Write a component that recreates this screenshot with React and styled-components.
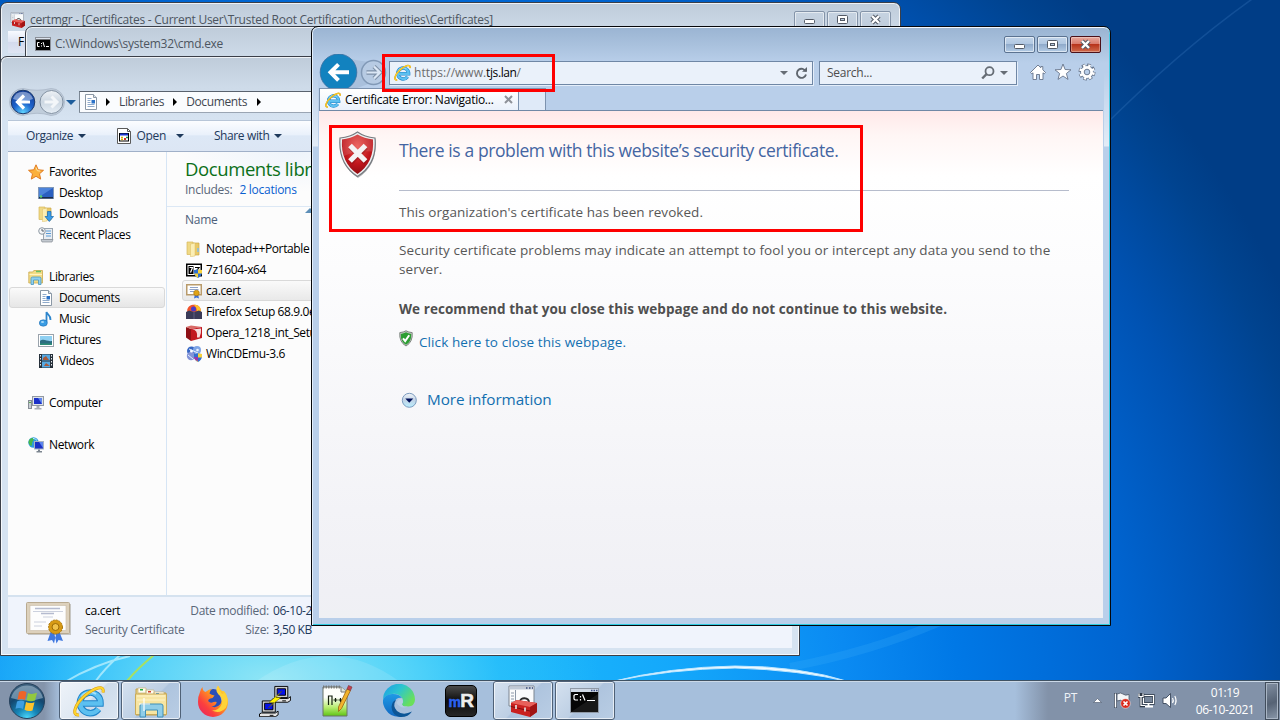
import React from "react";
import styled, { createGlobalStyle, css } from "styled-components";

const Global = createGlobalStyle`
  * { box-sizing: border-box; }
  body { margin: 0; overflow: hidden; font-family: "Open Sans", "Noto Sans", sans-serif; font-size: 12px; }
  svg { display: block; flex: none; }
`;

const Desktop = styled.div`
  position: relative;
  width: 1280px;
  height: 720px;
  overflow: hidden;
  display: flex;
  flex-direction: column;
  justify-content: flex-end;
  background:
    radial-gradient(ellipse 330px 150px at 270px 680px, rgba(150, 232, 245, 0.95), rgba(100, 218, 248, 0.8) 40%, rgba(50, 196, 250, 0.5) 70%, rgba(30, 180, 250, 0) 100%),
    radial-gradient(circle 1000px at 380px 720px, #22c4fb 0, #14a8fb 30%, #0a8af2 47%, #0078e6 58%, #0064d0 75%, #0052b2 86%, #00438f 96%, #003d86 100%);
`;

const Wallpaper = styled.svg`
  position: absolute;
  left: 0;
  top: 0;
`;

const Text = styled.span`
  font-size: ${(p) => p.$size || 12}px;
  letter-spacing: ${(p) => (p.$ls === undefined ? -0.27 : p.$ls)}px;
  color: ${(p) => p.$color || "#000"};
  font-weight: ${(p) => (p.$bold ? 700 : 400)};
  line-height: ${(p) => p.$lh || 20}px;
  white-space: nowrap;
`;

const Label = styled(Text)`
  letter-spacing: -0.38px;
`;

const Window = styled.section`
  position: absolute;
  left: ${(p) => p.$x}px;
  top: ${(p) => p.$y}px;
  width: ${(p) => p.$w}px;
  height: ${(p) => p.$h}px;
  display: flex;
  flex-direction: column;
  border: 1px solid #3b3f48;
  border-radius: 7px 7px 0 0;
  padding: 0 7px 7px;
  overflow: hidden;
  box-shadow: inset 0 0 0 1px rgba(255, 255, 255, 0.75);
  background: linear-gradient(#bfccda, #cddae8 28px, #d6e3f1 62px);
  ${(p) =>
    p.$active &&
    css`
      border-color: #05070b;
      box-shadow: inset 0 1px 0 #f2f8ff, inset 1px 0 0 #e4effb, inset -1px 0 0 #48cde4, inset 0 -1px 0 #2fcbe0;
      background:
        linear-gradient(rgba(255, 255, 255, 0) 45px, rgba(255, 255, 255, 0.6) 119px, transparent 120px) left / 6px 100% no-repeat,
        linear-gradient(rgba(255, 255, 255, 0) 45px, rgba(255, 255, 255, 0.6) 119px, transparent 120px) right / 6px 100% no-repeat,
        linear-gradient(#9ab4d2, #a9c1dd 18px, #b9cfea 36px);
    `}
`;

const TitleBar = styled.header`
  display: flex;
  align-items: center;
  gap: ${(p) => p.$gap || 4}px;
  height: ${(p) => p.$h}px;
  flex: none;
  padding: ${(p) => p.$pad || "0"};
`;

const Caption = styled.div`
  display: flex;
  gap: 2px;
  margin-left: auto;
  align-self: flex-start;
  padding-top: ${(p) => p.$top}px;
`;

const CaptionButton = styled.div`
  display: flex;
  align-items: center;
  justify-content: center;
  width: 31px;
  height: 17px;
  border: 1px solid ${(p) => (p.$close ? "#4b1019" : p.$faded ? "#8494a9" : "#5c7391")};
  border-radius: 2px;
  box-shadow: inset 0 0 0 1px rgba(255, 255, 255, ${(p) => (p.$close ? 0.3 : 0.55)});
  background: ${(p) =>
    p.$close
      ? "linear-gradient(#e8a99d, #d9796b 48%, #b8341c 50%, #cf6a4c)"
      : p.$faded
      ? "linear-gradient(#c6d3e1, #c0cddc)"
      : "linear-gradient(#c3d5ea, #b0c7e1 48%, #90abcb 50%, #b4cce6)"};
`;

const CertMenu = styled.div`
  display: flex;
  align-items: flex-start;
  width: 100%;
  height: 22px;
  padding: 1px 10px;
  background: linear-gradient(#f8faff, #dfe5f4 48%, #d3daed 50%, #dfe5f3);
`;

/* ---------- Explorer ---------- */
const ExplorerNav = styled.div`
  display: flex;
  align-items: center;
  height: 36px;
  flex: none;
  margin-top: 27px;
`;

const Address = styled.div`
  display: flex;
  align-items: center;
  flex: 1;
  height: 22px;
  margin-left: 3px;
  padding-left: 3px;
  border: 1px solid;
  border-color: #59626e #9aa5b3 #9aa5b3 #7b8794;
  background: #fafcfe;
`;

const Toolbar = styled.div`
  display: flex;
  align-items: center;
  height: 32px;
  flex: none;
  padding-left: 18px;
  border-top: 1px solid #b8c6d8;
  border-bottom: 1px solid #a0b0c8;
  background: linear-gradient(#fcfdff, #eaf1fb 45%, #dde8f6 50%, #dce6f4);
`;

const ToolItem = styled.div`
  display: flex;
  align-items: center;
  margin-right: ${(p) => p.$mr}px;
`;

const Caret = styled.i`
  width: 0;
  height: 0;
  border: ${(p) => p.$w || 4}px solid transparent;
  border-top-color: ${(p) => p.$color || "#1e395b"};
  border-bottom: 0;
  margin-left: ${(p) => p.$ml || 0}px;
  margin-right: ${(p) => p.$mr || 0}px;
`;

const Crumb = styled.i`
  width: 0;
  height: 0;
  border: 4px solid transparent;
  border-left: 4px solid #000;
  border-right: 0;
  margin: ${(p) => p.$m};
`;

const ExplorerBody = styled.div`
  display: flex;
  flex: 1;
  min-height: 0;
  background: #fcfcfc;
`;

const NavPane = styled.nav`
  width: 159px;
  flex: none;
  padding: 9px 1px 0;
  border-right: 1px solid #d6e5f5;
`;

const NavRow = styled.div`
  display: flex;
  align-items: center;
  height: 21px;
  gap: 5px;
  padding-left: ${(p) => (p.$child ? 28 : 18)}px;
  border: 1px solid transparent;
  border-radius: 3px;
  ${(p) =>
    p.$selected &&
    css`
      border-color: #d9d9d9;
      background: linear-gradient(#fafafa, #e6e6e6);
    `}
`;

const FilePane = styled.main`
  flex: 1;
  display: flex;
  flex-direction: column;
  background: radial-gradient(ellipse 120px 40px at 130px 0, #eef4fb, transparent);
`;

const LibraryHead = styled.div`
  display: flex;
  flex-direction: column;
  height: 55px;
  padding: 6px 0 0 18px;
  border-bottom: 1px solid #dce8f5;
`;

const LibrarySub = styled.div`
  display: flex;
  gap: 7px;
`;

const ColumnHead = styled.div`
  display: flex;
  align-items: flex-start;
  height: 31px;
  padding: 3px 0 0 18px;
`;

const SortMark = styled.i`
  width: 0;
  height: 0;
  border: 5px solid transparent;
  border-bottom-color: #5d8fb8;
  border-top: 0;
  margin: -2px 0 0 88px;
`;

const FileRow = styled.div`
  display: flex;
  align-items: center;
  gap: 4px;
  height: 21px;
  margin-left: 15px;
  padding-left: 3px;
  border: 1px solid transparent;
  border-radius: 3px;
  ${(p) =>
    p.$selected &&
    css`
      border-color: #d9d9d9;
      background: linear-gradient(#fafafa, #e9e9e9);
    `}
`;

const Details = styled.footer`
  display: flex;
  height: 53px;
  flex: none;
  padding: 5px 0 0 18px;
  border-top: 2px solid #d5e2ef;
  background: #f0f4fc;
`;

const DetailsCol = styled.div`
  display: flex;
  flex-direction: column;
  align-items: ${(p) => (p.$right ? "flex-end" : "flex-start")};
  width: ${(p) => p.$w}px;
  margin-left: ${(p) => p.$ml}px;
`;

/* ---------- Browser ---------- */
const BrowserBar = styled.div`
  display: flex;
  align-items: center;
  height: 38px;
  flex: none;
  margin-top: -3px;
  padding-top: 1px;
`;

const Field = styled.div`
  display: flex;
  align-items: center;
  width: ${(p) => p.$w}px;
  height: 24px;
  margin-left: ${(p) => p.$ml}px;
  padding: 0 ${(p) => p.$pr}px 0 ${(p) => p.$pl}px;
  border: 1px solid #6f87a5;
  box-shadow: 1px 1px 0 #e4eefa;
  background: #eaf1fa;
`;

const Spacer = styled.div`
  flex: 1;
`;

const Tools = styled.div`
  display: flex;
  gap: 6.5px;
  margin: -2px 0 0 12px;
`;

const Tabs = styled.div`
  position: relative;
  display: flex;
  height: 23px;
  flex: none;
  margin-top: -3px;
  border-bottom: 1px solid #7088a6;
`;

const Tab = styled.div`
  display: flex;
  align-items: center;
  gap: 4px;
  width: 200px;
  height: 22px;
  padding: 0 5px 0 5px;
  border: 1px solid #7c92ae;
  border-bottom: 0;
  background: linear-gradient(#ffffff, #eaf1fb);
`;

const NewTab = styled.div`
  width: 27px;
  border: 1px solid #7c92ae;
  border-width: 1px 1px 0 0;
  background: #dfeaf8;
`;

const Page = styled.article`
  flex: 1;
  display: flex;
  align-items: flex-start;
  padding: 20px 34px 0 19px;
  background: linear-gradient(#ffe9e9, #fff6f5 25px, #ffffff 65px, #fcfcfd 160px, #f0f0f5 480px, #eff0f4);
`;

const Message = styled.div`
  flex: 1;
  display: flex;
  flex-direction: column;
  margin: 1px 0 0 21px;
`;

const Rule = styled.div`
  height: 1px;
  margin: 21px 0 12px;
  background: #b6bccc;
`;

const LinkRow = styled.div`
  display: flex;
  align-items: ${(p) => p.$align || "center"};
  gap: ${(p) => p.$gap}px;
  margin-top: ${(p) => p.$mt}px;
  padding-left: ${(p) => p.$pl || 0}px;
`;

const Highlight = styled.div`
  position: absolute;
  left: ${(p) => p.$x}px;
  top: ${(p) => p.$y}px;
  width: ${(p) => p.$w}px;
  height: ${(p) => p.$h}px;
  border: 3px solid #fe0000;
`;

/* ---------- Taskbar ---------- */
const Taskbar = styled.div`
  position: relative;
  display: flex;
  height: 40px;
  border-top: 1px solid #3f5263;
  box-shadow: inset 0 1px 0 #cbd9e8;
  background: linear-gradient(90deg, #8494ab 0, #8494ab 44px, #a6bfdc 60px, #a6bfdc 1015px, #8292a9 1048px, #8292a9);
`;

const Start = styled.div`
  display: flex;
  align-items: center;
  width: 59px;
  padding-left: 8px;
`;

const TaskButton = styled.div`
  display: flex;
  align-items: center;
  justify-content: center;
  width: 60px;
  height: 39px;
  margin-right: 2px;
  border: 1px solid transparent;
  border-radius: 3px;
  ${(p) =>
    p.$open &&
    css`
      border-color: #4f6177;
      box-shadow: inset 0 0 0 1px rgba(255, 255, 255, 0.65);
      background: linear-gradient(135deg, #d5e1ef, #bdcfe4 50%, #aec4de 52%, #b9cde4);
    `}
  ${(p) =>
    p.$open === "active" &&
    css`
      background: linear-gradient(135deg, #eef3f9, #dfe8f2 50%, #cddbea 52%, #dbe6f2);
    `}
`;

const Tray = styled.div`
  display: flex;
  align-items: center;
  margin-left: auto;
`;

const TrayIcons = styled.div`
  display: flex;
  align-items: center;
  gap: 7px;
  margin: 0 6px 0 12px;
`;

const Language = styled.div`
  margin: -6px 16px 0 0;
`;

const Clock = styled.div`
  display: flex;
  flex-direction: column;
  align-items: center;
  width: 80px;
`;

const ShowDesktop = styled.div`
  width: 14px;
  height: 38px;
  margin: 1px 1px 0 0;
  border: 1px solid #414d5c;
  box-shadow: inset 0 0 0 1px #a9b5c4;
  background: linear-gradient(160deg, #8290a3, #5d6a7c 45%, #566375 55%, #8a98aa);
`;

/* ---------- Icons ---------- */
const Svg = ({ s = 16, w, h, vb, children, ...rest }) => (
  <svg width={w || s} height={h || s} viewBox={vb || `0 0 ${w || s} ${h || s}`} fill="none" {...rest}>
    {children}
  </svg>
);

const IE = ({ s }) => (
  <Svg s={s} vb="0 0 32 32">
    <path d="M9 18.500H27.500A10.300 10.300 0 1 0 25.500 24" stroke="#1d83c9" strokeWidth="6.600" />
    <path d="M9 18.500H27.500A10.300 10.300 0 1 0 25.500 24" stroke="#5cc0f0" strokeWidth="4.600" />
    <path d="M8.500 12C11 7.500 18 5.500 23 9" stroke="#a7e2fb" strokeWidth="1.800" />
    <path d="M6 30C-2 31 2 19 12 10.500C21 3 32 -1 30 7.500" stroke="#d99a0b" strokeWidth="3" />
    <path d="M6 30C-2 31 2 19 12 10.500C21 3 32 -1 30 7.500" stroke="#fdd42e" strokeWidth="2" />
  </Svg>
);

const Min = ({ c = "#535a66" }) => (
  <Svg w={13} h={11}><rect x="1.500" y="5.500" width="10" height="4" rx="1" fill="#fff" stroke={c} /></Svg>
);
const Max = ({ c = "#535a66" }) => (
  <Svg w={13} h={11}><rect x="1.500" y="1.500" width="10" height="8" rx="1" fill="#fff" stroke={c} /><rect x="4.500" y="4.500" width="4" height="2" fill="#b9cbe0" stroke={c} /></Svg>
);
const Close = ({ c = "#535a66" }) => (
  <Svg w={13} h={11}>
    <path d="M3 2l7 7M10 2L3 9" stroke={c} strokeWidth="4.400" />
    <path d="M3 2l7 7M10 2L3 9" stroke="#fff" strokeWidth="2.400" />
  </Svg>
);

const Toolbox = ({ s = 16 }) => (
  <Svg s={s} vb="0 0 32 32">
    <path d="M2 1h25v20H2z" fill="#fafbfc" stroke="#7d8590" />
    <path d="M2.500 1.500h24v3h-24z" fill="#c0c9d6" />
    <path d="M19 3h1.500M22 3h1.500M25 3h1" stroke="#384a78" strokeWidth="1.500" />
    <path d="M8.500 5v16M4 8h3M4 11h3M4 14h3M4 17h3" stroke="#8c98a8" />
    <path d="M13 16.500c0-4.500 9-4.500 9 1" stroke="#2b2b2b" strokeWidth="1.800" />
    <path d="M4 18l6-3 20 3v9l-7 5-19-5z" fill="#c9201f" />
    <path d="M4 18l6-3 20 3-7 4z" fill="#e8605a" />
    <path d="M4 21.500l19 4.500 7-4.500" stroke="#7d0f10" />
    <path d="M23 22v10l7-5v-9z" fill="#a01414" />
    <path d="M9 20v4M18 22.500v4" stroke="#e8e8e8" strokeWidth="1.600" />
  </Svg>
);

const Cmd = ({ big }) =>
  big ? (
    <Svg w={32} h={28}>
      <rect x="1.500" y="1.500" width="28" height="24" fill="#050505" stroke="#8f99a6" />
      <path d="M2 2h27v3H2z" fill="#cfd8e4" />
      <path d="M22 3.500h1.500M24.500 3.500h1.500M27 3.500h1.500" stroke="#3c4f86" strokeWidth="1.500" />
      <path d="M9 7.500H6L5 8.500V12l1 1H9M11.500 9v1.500M11.500 12v1.500M13.500 7.500l2.500 6M18 13.500h8" stroke="#fff" strokeWidth="1.200" />
      <path d="M2 25L29 7v18z" fill="#fff" opacity=".08" />
    </Svg>
  ) : (
    <Svg w={16} h={14}>
      <rect x=".5" y=".5" width="15" height="13" fill="#000" stroke="#8a8f98" />
      <path d="M1 1h14v1.500H1z" fill="#dde4ee" />
      <path d="M4.500 5.500h-2v4h2M6.500 6v1M6.500 8.500v1M8 5l1.500 5M11 9.500h3" stroke="#fff" />
    </Svg>
  );

const Star = () => (
  <Svg><path d="M8 .8l2.200 5 5.300.5-4 3.500 1.200 5.300L8 12.300l-4.700 2.800 1.200-5.300-4-3.500 5.300-.5z" fill="#fbb03b" stroke="#e07b22" /><path d="M8 3.500l1.300 3.200 3 .4" stroke="#fee7a6" /></Svg>
);
const DesktopIcon = () => (
  <Svg><rect x=".5" y="2.500" width="15" height="11" fill="#2a5fc0" stroke="#7f97b8" /><path d="M1 3h14L1 12z" fill="#5b93e6" opacity=".7" /><path d="M1 12h14v1.500H1z" fill="#1a2b49" /><circle cx="3" cy="11.500" r="1.300" fill="#5ad06c" /></Svg>
);
const Folder = ({ arrow }) => (
  <Svg>
    <path d="M1 1h6v12.500H1z" fill="#f0d985" stroke="#d7b75a" strokeWidth=".7" />
    <path d="M7 2h6v12H7z" fill="#e9c968" stroke="#cda94a" strokeWidth=".7" />
    <path d="M4.500 3l4.500-1V15l-4.500.8z" fill="#fbeeb4" stroke="#dcbf68" strokeWidth=".5" />
    {arrow ? <path d="M9.500 5.500h3.500v5h2.500L11.300 15.500 7 10.500h2.500z" fill="#3b9ce8" stroke="#1668b0" strokeWidth=".7" /> : <path d="M12 7v4" stroke="#7fbcec" strokeWidth="1.500" />}
  </Svg>
);
const Recent = () => (
  <Svg><rect x="5.500" y="1.500" width="9" height="11" fill="#e9edf2" stroke="#9aa5b0" /><path d="M8 4h5M8 6.500h5M8 9h5" stroke="#5b9bd6" /><path d="M3 12.500h12l-1 2.500H4z" fill="#c3c9d0" stroke="#878e96" strokeWidth=".7" /><circle cx="4" cy="4" r="3.300" fill="#f4f6f8" stroke="#8e98a2" /><path d="M4 2v2h2" stroke="#56616c" /></Svg>
);
const Libraries = () => (
  <Svg><path d="M.8 3h4l1-1.500h8.700V14H.8z" fill="#f3dc86" stroke="#c9a94e" strokeWidth=".8" /><path d="M8 2.500h5" stroke="#67c064" strokeWidth="1.500" /><path d="M1.500 5.500h12.500" stroke="#fff3c0" /><path d="M3 15.500V9.500q0-1.500 1.500-1.500h7q1.500 0 1.500 1.500v6h-2.500V11h-5v4.500z" fill="#8fd0ee" stroke="#4a97c0" strokeWidth=".8" /></Svg>
);
const Doc = () => (
  <Svg><path d="M2.500.5h8l3 3v12h-11z" fill="#fff" stroke="#8b98a6" /><path d="M10.500.5v3h3" fill="#dde3ea" stroke="#8b98a6" /><path d="M4.500 4.500h4M4.500 6.500h3M4.500 8.500h3M4.500 10.500h7M4.500 12.500h7" stroke="#8eaacb" /><rect x="8.500" y="6" width="3.500" height="3.500" fill="#2a72c8" /></Svg>
);
const Music = () => (
  <Svg><path d="M8.500 11.500V1c1 3 4.500 3 4 8" stroke="#2d86cd" strokeWidth="1.800" /><ellipse cx="5.300" cy="12" rx="4" ry="3.200" fill="#3a9de4" stroke="#1e6fb4" strokeWidth=".6" /><ellipse cx="4.500" cy="11" rx="1.600" ry="1" fill="#a6d9f8" /></Svg>
);
const Pictures = () => (
  <Svg><rect x=".5" y="2.500" width="15" height="12" fill="#fff" stroke="#9aa3ac" /><path d="M2 4h12v9H2z" fill="#8fd0f2" /><path d="M2 9c4-3 7 1 12 0v4H2z" fill="#2c6d80" /><path d="M2 11.500h12V13H2z" fill="#2d8e76" /></Svg>
);
const Videos = () => (
  <Svg><rect x="1" y="1" width="14" height="14" fill="#26303a" /><path d="M4 1.500h8v6H4zM4 8.500h8v6H4z" fill="#57a9e2" /><path d="M5 5l3-2 3 4H5zM6 13l2-3 4 3z" fill="#a85a3c" /><path d="M2.500 2v12M13.500 2v12" stroke="#e8edf2" strokeDasharray="1.500 1.500" /></Svg>
);
const Computer = () => (
  <Svg><rect x=".5" y="5.500" width="3" height="8" fill="#c9ced4" stroke="#868d95" /><path d="M1 7.500h2" stroke="#59b04e" /><rect x="4.500" y="1.500" width="11" height="9" fill="#dfe3e8" stroke="#9299a2" /><rect x="6" y="3" width="8" height="6" fill="#1b31c8" /><path d="M10 3h4v6z" fill="#5f86ee" /><path d="M8.500 11h3v2h2v1.500h-7V13h2z" fill="#a9afb6" /></Svg>
);
const Network = () => (
  <Svg><circle cx="5.500" cy="5.500" r="5.200" fill="#2f9be0" /><path d="M2 2c3-2 5-1 3 2s0 4-2 5C0 7 0 4 2 2z" fill="#45b84b" /><path d="M5 1.500c2 0 3 1 4 2" stroke="#c6eefc" /><rect x="6.500" y="4.500" width="9" height="7.500" fill="#1a30c4" stroke="#a8b3c2" /><path d="M11 5h4v6z" fill="#5c84ec" /><path d="M10 12.500h2v1.500h2v1.500H8.500V14H10z" fill="#7c858f" /></Svg>
);
const Shield = () => (
  <g transform="translate(8 7)"><path d="M0 1q3 0 4-1 1 1 4 1 .5 6-4 8Q-.5 7 0 1z" fill="#2f6fd0" /><path d="M4 0q1 1 4 1 .2 2-.2 3.500H4zM4 4.500V9Q1 7.500.3 4.500z" fill="#f7d23c" /></g>
);
const SevenZip = () => (
  <Svg><rect x=".75" y="2.250" width="14.500" height="11.500" fill="#fff" stroke="#000" strokeWidth="1.500" /><path d="M2.500 4h5v8h-5z" fill="#000" /><path d="M3.500 5.500h3L4.500 10.500" stroke="#fff" strokeWidth="1.200" /><path d="M9 5.500h4L9.500 10" stroke="#000" strokeWidth="1.200" /><Shield /></Svg>
);
const CertSmall = () => (
  <Svg><rect x=".75" y="1.750" width="14.500" height="10" fill="#fff" stroke="#b99b6b" strokeWidth="1.500" /><path d="M4 4.500h8M3.500 6.500h9M4 8.500h4" stroke="#8fa3c8" /><path d="M9 11l-1 4.500 2.500-1 2.500 1-1-4.500z" fill="#3a6fd8" /><circle cx="10.500" cy="10" r="2.800" fill="#e0a317" stroke="#a87208" strokeWidth=".6" /></Svg>
);
const FirefoxBox = () => (
  <Svg><path d="M1.500 9C0 4 4 0 8 .8 13 0 16 5 14.500 9z" fill="#f0522c" /><path d="M8 .8c5-.5 8 4 6.500 8L10 9c2-3 0-6-2-8z" fill="#fcc02c" /><circle cx="7.500" cy="5" r="2.500" fill="#4a3cc8" /><path d="M0 8l3-1.500L8 8l5-1.500L16 8v7H0z" fill="#3a3b58" /><path d="M8 8v7" stroke="#5c5e80" /></Svg>
);
const OperaBox = () => (
  <Svg><path d="M0 2l5 2v12L0 12.500z" fill="#8e1015" /><path d="M0 2l5-1.500L16 2 5 4z" fill="#d86a66" /><path d="M5 4L16 2v11L5 16z" fill="#c2181f" /><path d="M6 4.500q6 0 5 8l2.500 0q2-4 1.500-9z" fill="#fff" opacity=".85" /></Svg>
);
const CdEmu = () => (
  <Svg><circle cx="5.500" cy="5" r="4.500" fill="#3767c4" /><circle cx="11" cy="4" r="4" fill="#7fa5e6" /><circle cx="5" cy="10" r="4.200" fill="#8494d8" /><circle cx="5.500" cy="5" r="1.500" fill="#fff" /><circle cx="11.500" cy="4" r="1.300" fill="#e9f2ff" /><path d="M2 9l5 4M3 3l9 4" stroke="#e6f0ff" /><Shield /><path d="M8 11h4v4q-4-1-4-4z" fill="#9a34a8" /></Svg>
);
const AppWindow = () => (
  <Svg w={14} h={16}><path d="M.5.500h10l3 3v12H.500z" fill="#fff" stroke="#5a5a5a" /><path d="M10.500.500v3h3" stroke="#5a5a5a" /><rect x="2.500" y="5.500" width="9" height="7.500" fill="#fff" stroke="#000" /><path d="M3 6.500h8" stroke="#1a36d0" strokeWidth="1.800" /><path d="M4 9.500h2M4 11.500h2" stroke="#d2b10c" strokeWidth="1.300" /><path d="M7 11h2" stroke="#d03030" strokeWidth="2" /><path d="M9 9.500h2" stroke="#22914a" strokeWidth="1.500" /></Svg>
);
const NavButtons = () => (
  <Svg w={58} h={30}>
    <defs>
      <radialGradient id="nb" cx=".5" cy=".95" r=".95"><stop offset="0" stopColor="#5fd4ff" /><stop offset=".45" stopColor="#1c62cc" /><stop offset="1" stopColor="#123a92" /></radialGradient>
      <linearGradient id="nf" x2="0" y2="1"><stop offset="0" stopColor="#eef2f6" /><stop offset=".5" stopColor="#ccd7e2" /><stop offset="1" stopColor="#e6eef6" /></linearGradient>
    </defs>
    <path d="M15 1.500Q29 5 43 1.500A13 13 0 0 1 43 28.500Q29 24 15 28.500A13 13 0 0 1 15 1.500z" fill="#c0cddb" stroke="#a9b6c6" strokeWidth=".8" />
    <circle cx="15" cy="15" r="11.800" fill="url(#nb)" stroke="#1c3a6c" />
    <path d="M5 12a10.500 10.500 0 0 1 20 0q-10 4-20 0z" fill="#fff" opacity=".42" />
    <path d="M16 8.500L9.500 15l6.500 6.500M10 15h12" stroke="#fff" strokeWidth="3.200" />
    <circle cx="43.500" cy="15" r="11.500" fill="url(#nf)" stroke="#8291a2" />
    <path d="M43.500 9.500l5.500 5.500-5.500 5.500M36.500 15h12" stroke="#f3f6f9" strokeWidth="3" />
  </Svg>
);
const IENav = () => (
  <Svg w={70} h={38}>
    <path d="M20 1Q38 8 55 8V28L30 37z" fill="#a9c0dc" />
    <circle cx="19.500" cy="18.300" r="18.300" fill="#1282bf" stroke="#3c6f9f" strokeWidth=".8" />
    <path d="M19.500 10.300L11.500 18.300l8 8M12 18.300h18" stroke="#fff" strokeWidth="4" />
    <circle cx="54.500" cy="18.500" r="12" fill="#b7cbe3" stroke="#8199b6" strokeWidth="1.500" />
    <path d="M55 12.500l6 6-6 6M47.500 18.500H60" stroke="#7d90a8" strokeWidth="4.400" />
    <path d="M55 12.500l6 6-6 6M47.500 18.500H60" stroke="#dbe7f5" strokeWidth="2.200" />
  </Svg>
);
const Refresh = () => (
  <Svg w={13} h={14}><path d="M10.800 5.500A4.600 4.600 0 1 0 11 8.500" stroke="#5f666e" strokeWidth="1.900" /><path d="M7 5.800h5V1z" fill="#5f666e" /></Svg>
);
const Lens = () => (
  <Svg w={14} h={14}><circle cx="8.500" cy="5.200" r="4" stroke="#666d75" strokeWidth="1.800" /><path d="M5.500 8.200L1.200 12.500" stroke="#666d75" strokeWidth="2.400" /></Svg>
);
const Home = () => (
  <Svg s={18}><path d="M9 2L1.500 9.500 2.800 10.800 4 9.800V16.500H7.500V11.500H10.500V16.500H14V9.800L15.200 10.800 16.500 9.500 13.800 6.800V3.500H11.800V4.800z" fill="#fff" stroke="#66748a" strokeWidth=".9" /></Svg>
);
const FavStar = () => (
  <Svg s={18}><path d="M9 1l2.100 5.500 5.900.3-4.600 3.700 1.600 5.900L9 13l-5 3.400 1.600-5.900L1 6.800l5.900-.3z" fill="#fff" stroke="#66748a" strokeWidth=".9" /></Svg>
);
const Gear = () => (
  <Svg s={18}>
    <circle cx="9" cy="9" r="6.700" stroke="#66748a" strokeWidth="3.600" strokeDasharray="3.400 1.862" />
    <circle cx="9" cy="9" r="6" stroke="#66748a" strokeWidth="1.600" />
    <circle cx="9" cy="9" r="6.400" stroke="#fff" strokeWidth="2.900" strokeDasharray="2.200 2.826" strokeDashoffset="-.5" />
    <circle cx="9" cy="9" r="4.500" stroke="#fff" strokeWidth="3" />
    <circle cx="9" cy="9" r="2.800" stroke="#66748a" strokeWidth=".9" />
  </Svg>
);
const RedShield = () => (
  <Svg w={40} h={48}>
    <defs>
      <radialGradient id="rs" cx=".5" cy=".3" r=".75"><stop offset="0" stopColor="#ea5049" /><stop offset=".6" stopColor="#c0151b" /><stop offset="1" stopColor="#870b10" /></radialGradient>
    </defs>
    <path d="M20 2q7 5 17.500 6Q40 34 20 47 0 34 2.500 8 13 7 20 2z" fill="#6f7378" opacity=".5" />
    <path d="M19.500 1q7 5 17.500 6Q39.500 33 19.500 45.500 0 33 2 7 12.500 6 19.500 1z" fill="#eceeef" stroke="#777b80" strokeWidth="1.200" />
    <path d="M19.500 3.500q6.500 4 15.500 5Q36.500 31.500 19.500 43 2.500 31.500 4 8.500q9-1 15.500-5z" fill="url(#rs)" />
    <path d="M4 8.500q9-1 15.500-5 6.500 4 15.500 5 .5 7-1 12Q18 19 6 25q-2-7-2-16.500z" fill="#fff" opacity=".13" />
    <path d="M12 15l15.500 15.500M27.500 15L12 30.500" stroke="#701014" strokeWidth="5.500" opacity=".35" transform="translate(.5 1)" />
    <path d="M12 14.500L27.500 30M27.500 14.500L12 30" stroke="#f4f4f4" strokeWidth="5.200" />
  </Svg>
);
const GreenShield = () => (
  <Svg w={14} h={17}><path d="M7 .8q2.500 1.500 6.200 1.800Q14 12 7 16 0 12 .8 2.600 4.500 2.300 7 .8z" fill="#c4c9c4" stroke="#7f8580" /><path d="M7 2.300q2.200 1.300 5.200 1.600Q12.500 11.500 7 14.700 1.500 11.500 1.800 3.900 4.800 3.600 7 2.300z" fill="#2c9e32" /><path d="M4 8.300l2.200 2.700 4-5.700" stroke="#fff" strokeWidth="2" /></Svg>
);
const MoreIcon = () => (
  <Svg><defs><linearGradient id="mi" x2="0" y2="1"><stop stopColor="#f2f5f9" /><stop offset=".5" stopColor="#c2d3e6" /><stop offset="1" stopColor="#b9efff" /></linearGradient></defs><circle cx="8.300" cy="8.300" r="7" fill="url(#mi)" stroke="#7c9cbf" /><path d="M4.300 6.500h8L8.300 10.800z" fill="#001058" /></Svg>
);
const CertLarge = () => (
  <Svg w={46} h={42}>
    <rect x="2" y="2" width="43" height="31" fill="#aaa79f" opacity=".6" />
    <rect x=".5" y=".5" width="43" height="31" rx="1" fill="#ddd1bc" stroke="#b9aa90" />
    <rect x="4" y="3.500" width="36" height="25" fill="#fdfdfd" stroke="#c9bda8" strokeWidth=".6" />
    <path d="M9 6.500h25M15 11.500h13" stroke="#b5bbcf" strokeWidth="1.500" />
    <path d="M7 9.500h30M17 15h10M8 20h12M8 24h8" stroke="#ccd1de" />
    <path d="M25 29l-3.500 10 4.500-1 2 3.500 2-9zM33 29l4 10-4.500-1-2 3.500-2-9z" fill="#3f78e0" />
    <circle cx="29.500" cy="25" r="7" fill="#d79a14" stroke="#a87308" strokeDasharray="2 1" />
    <circle cx="29.500" cy="25" r="3.500" fill="#f0c24a" stroke="#9c6a06" />
  </Svg>
);

const Orb = () => (
  <Svg s={38}>
    <defs>
      <radialGradient id="ob" cx=".5" cy="1" r="1"><stop offset="0" stopColor="#4fdcff" /><stop offset=".3" stopColor="#1687b8" /><stop offset=".65" stopColor="#14476f" /><stop offset="1" stopColor="#41637f" /></radialGradient>
    </defs>
    <circle cx="19" cy="19" r="17.500" fill="url(#ob)" stroke="#26415c" />
    <path d="M3 16a16.500 16.500 0 0 1 32 0q-16 5-32 0z" fill="#d6e6f2" opacity=".42" />
    <path d="M11 10q4-2 7.500.3L17 18q-3.500-2-7.500-.3z" fill="#ee6428" />
    <path d="M20 11q3.500 2 9-.2L27 18.500q-4.500 1.800-8.500-.3z" fill="#92c83e" />
    <path d="M9 19.500q4-2 7.500 0L15 27q-3.500-2-7.500-.3z" fill="#3f9fe2" />
    <path d="M18 20q3.500 2 8.500.2L24.500 28.500q-4.500 1.300-8-.7z" fill="#fdc32c" />
  </Svg>
);
const ExplorerBig = () => (
  <Svg w={34} h={34}>
    <path d="M2 5h9l2 2h6l2 2h11v22H2z" fill="#ead389" stroke="#c2a14d" />
    <path d="M4 4h8v5H4zM12 6h8v5h-8zM20 8h10v5H20z" fill="#fffdf2" stroke="#c7b27a" strokeWidth=".7" />
    <path d="M6 5h3v1.500H6z" fill="#20a838" /><path d="M14 7h3v1.500h-3z" fill="#d0402c" /><path d="M22 9h3v1.500h-3z" fill="#2a90d8" />
    <path d="M1.500 10h31v20.500h-31z" fill="#f7e5a2" stroke="#c9aa58" />
    <path d="M3 12h28M3 16h28" stroke="#fff4c9" />
    <path d="M6 33V22q0-2 2-2h19q2 0 2 2v11h-5.500v-7h-12v7z" fill="#8fcde8" stroke="#3f8fb8" />
    <path d="M10 14v13M5 20h11" stroke="#fff" strokeWidth="1.200" />
  </Svg>
);
const Firefox = () => (
  <Svg s={32}>
    <defs><linearGradient id="ff" x1="1" x2="0" y2="1"><stop stopColor="#fff044" /><stop offset=".4" stopColor="#ff9a1f" /><stop offset=".7" stopColor="#fb3f3e" /><stop offset="1" stopColor="#e2206a" /></linearGradient></defs>
    <path d="M9 8q6-7 13-2l3 12-6 7-9-2z" fill="#2b4fb8" />
    <path d="M3 7q.5-3 2.500-5 0 4 3 5 3.500-3 6.500-3-2.500 2-2.500 4.500 2 1.500 5 2-1.500 3-4 3-3 1-2 3 2 2 5 .5 4-1 3 1-2 4-6 3 6 3 10-2 3-6-1-10Q19 5 21 .5 23 4 25 6l2 0q4 5 4 11A15 15 0 0 1 1 17q0-6 2-10z" fill="url(#ff)" />
    <path d="M21 .5q-3.500 5 .5 9 5 4 3 10-2.500 6-9.500 6 8 4 14-3 4-9-2-15-.5 1.500-2 1.500Q22 5 21 .5z" fill="#ffd338" />
  </Svg>
);
const Putty = () => {
  const pc = (
    <g stroke="#000">
      <path d="M3 1h14v12H3z" fill="#d0d0d0" /><path d="M5.500 3.500h9v7h-9z" fill="#0713e8" />
      <path d="M2 14h15l3-2v4l-3 2H0v-3z" fill="#e4e4e4" /><path d="M11 16.500h4" />
    </g>
  );
  return (
    <Svg s={32}><g transform="translate(13 .5) scale(.93)">{pc}</g><g transform="translate(.5 15) scale(.93)">{pc}</g><path d="M23 6L10 17.500h5L9 23l13-10.500h-5z" fill="#fff200" stroke="#5c5800" strokeWidth=".5" /></Svg>
  );
};
const Npp = () => (
  <Svg w={32} h={34}>
    <defs><linearGradient id="np" x2="0" y2="1"><stop offset=".35" stopColor="#fdfefb" /><stop offset=".7" stopColor="#b8ec70" /><stop offset="1" stopColor="#5ec414" /></linearGradient></defs>
    <path d="M2 3h18l6 5v24H2z" fill="url(#np)" stroke="#6d7468" />
    <path d="M2 3h18" stroke="#777" strokeWidth="3" strokeDasharray="1.300 1.300" /><path d="M20 3v5h6" fill="#dfe5da" stroke="#777" />
    <path d="M7.500 21V12h3.500v9M12.500 16h4M14.500 14v4M17.500 16h4M19.500 14v4" stroke="#15200f" strokeWidth="1.200" />
    <path d="M26 5l3.500 1.500-9 18-3 3v-4.500z" fill="#f2b32c" stroke="#9b6414" strokeWidth=".8" /><path d="M26 5l1.500-3.500 3.500 1.500L29.500 6.500z" fill="#c5404c" stroke="#7a3038" strokeWidth=".6" />
  </Svg>
);
const Edge = () => (
  <Svg s={34}>
    <defs>
      <linearGradient id="e1" x2="1" y2=".6"><stop stopColor="#1b9be8" /><stop offset=".5" stopColor="#2cc5cf" /><stop offset="1" stopColor="#6ae05a" /></linearGradient>
      <linearGradient id="e2" x2="0" y2="1"><stop stopColor="#1f9ae6" /><stop offset="1" stopColor="#1167c0" /></linearGradient>
    </defs>
    <path d="M1 16A16 16 0 0 1 33 15.500Q33 22 26 22.500 20 23 20 20 22 18 20.500 14.500 17 9 10 10 3 11 1 16z" fill="url(#e1)" />
    <path d="M1 16Q3 10.500 10 10 17 9.500 20 14 14 13 12 19 11 28 20 32.500 9 34 4 26 .5 21 1 16z" fill="url(#e2)" />
    <path d="M14 16q-4 6 1 11 6 5 15 .5-4 6-12 5.500-8-2-8.500-10Q10 17 14 16z" fill="#0c5596" />
    <path d="M14.500 19q1-4 5-4.500 2.500 3 .5 5.500 0 3 6 2.500-7 3-11.500-3.500z" fill="#b5cce4" />
  </Svg>
);
const MRBox = styled.div`
  display: flex;
  align-items: baseline;
  justify-content: center;
  width: 32px;
  height: 32px;
  padding-top: 4px;
  border: 1px solid #000;
  border-radius: 5px;
  background: linear-gradient(#4a4a4a, #0c0c0c 50%, #262626);
  font: 700 14px/22px "Liberation Sans", sans-serif;
  letter-spacing: -0.5px;
  color: #2b62ee;
  -webkit-text-stroke: 0.5px currentColor;
  b { font-size: 19px; color: #ededed; }
`;
const Tri = () => <Svg w={9} h={5}><path d="M.5 4.500L4.500.500l4 4z" fill="#fff" stroke="#48566a" strokeWidth=".6" /></Svg>;
const Flag = () => (
  <Svg s={17}><path d="M1.500 1v15" stroke="#3a4658" strokeWidth="3" /><path d="M1.500 1.500v14" stroke="#fff" strokeWidth="1.500" /><path d="M3 2q4-2 6 0t6 .5v7q-4 1-6-.5t-6 0z" fill="#f2f5f8" stroke="#4a5668" strokeWidth=".8" /><circle cx="11.500" cy="11.500" r="4.800" fill="#d92a1c" stroke="#fff" strokeWidth=".5" /><path d="M9.500 9.500l4 4M13.500 9.500l-4 4" stroke="#fff" strokeWidth="1.700" /></Svg>
);
const Net = () => (
  <Svg s={17}><path d="M5.500 3.500h10v8h-10z" fill="#77869a" stroke="#2d3847" strokeWidth="2.500" /><path d="M5.500 3.500h10v8h-10z" stroke="#fff" strokeWidth="1.200" /><path d="M7 14.500h8M10.500 12v2" stroke="#fff" strokeWidth="1.800" /><path d="M1 1.500v3h4v-3M3 1v13h4" stroke="#2d3847" strokeWidth="2.600" /><path d="M1 1.500v3h4v-3M3 5v8.500h4" stroke="#fff" strokeWidth="1.200" /></Svg>
);
const Speaker = () => (
  <Svg s={17}><path d="M1 6h3l4.500-4.500v14L4 11.500H1z" fill="#fff" stroke="#39465a" strokeWidth=".9" /><path d="M10.500 6q1.500 2.500 0 5M12.800 4q2.500 4.500 0 9" stroke="#fff" strokeWidth="1.200" /></Svg>
);
const TabClose = () => (
  <Svg s={9}><path d="M1 1l7 7M8 1L1 8" stroke="#8e9299" strokeWidth="2" /></Svg>
);

const nav = [
  ["Favorites", Star],
  ["Desktop", DesktopIcon, true],
  ["Downloads", () => <Folder arrow />, true],
  ["Recent Places", Recent, true],
  null,
  ["Libraries", Libraries],
  ["Documents", Doc, true],
  ["Music", Music, true],
  ["Pictures", Pictures, true],
  ["Videos", Videos, true],
  null,
  ["Computer", Computer],
  null,
  ["Network", Network],
];

const files = [
  ["Notepad++Portable", Folder],
  ["7z1604-x64", SevenZip],
  ["ca.cert", CertSmall],
  ["Firefox Setup 68.9.0esr", FirefoxBox],
  ["Opera_1218_int_Setup", OperaBox],
  ["WinCDEmu-3.6", CdEmu],
];

export default function App() {
  return (
    <Desktop>
      <Global />
      <Wallpaper width="1280" height="720" fill="none">
        <path d="M65 682Q95 664 130 656M95 682Q105 668 120 655" stroke="#c7f4fd" strokeWidth="2" opacity=".7" />
        <path d="M127 681Q138 668 154 655" stroke="#a8e060" strokeWidth="2" />
        <path d="M255 682Q330 630 400 682z" fill="#fff" opacity=".12" />
        <path d="M610 682Q670 667 735 666 800 666 850 682 800 670 735 668 670 669 610 682z" fill="#f2fbff" stroke="#bfe6ff" strokeWidth="1" />
        <path d="M790 667Q870 652 940 622" stroke="#46b6fa" strokeWidth="8" opacity=".2" />
        <path d="M1100 130Q1180 50 1255 -3" stroke="#3c7cc0" strokeWidth="1.500" opacity=".3" />
      </Wallpaper>

      <Window $x={0} $y={2} $w={901} $h={400}>
        <TitleBar $h={28} $gap={4} $pad="6px 2px 0 2px">
          <Toolbox s={16} />
          <Text $color="#4d5560" $ls={-0.26} $lh={18}>certmgr - [Certificates - Current User\Trusted Root Certification Authorities\Certificates]</Text>
          <Caption $top={2}>
            <CaptionButton $faded><Min /></CaptionButton>
            <CaptionButton $faded><Max /></CaptionButton>
            <CaptionButton $faded><Close /></CaptionButton>
          </Caption>
        </TitleBar>
        <CertMenu><Text $ls={1}>File</Text></CertMenu>
      </Window>

      <Window $x={25} $y={26} $w={674} $h={300}>
        <TitleBar $h={30} $gap={4} $pad="4px 0 0 2px">
          <Cmd />
          <Text $color="#4d5560">C:\Windows\system32\cmd.exe</Text>
        </TitleBar>
      </Window>

      <Window $x={0} $y={56} $w={800} $h={600}>
        <ExplorerNav>
          <NavButtons />
          <Caret $w={5} $ml={0} $color="#1f5e9c" />
          <Address>
            <Doc />
            <Crumb $m="0 9px 0 7px" />
            <Label $color="#3f4650">Libraries</Label>
            <Crumb $m="0 9px 0 9px" />
            <Label $color="#3f4650">Documents</Label>
            <Crumb $m="0 0 0 10px" />
          </Address>
        </ExplorerNav>
        <Toolbar>
          <ToolItem $mr={31}><Label $color="#1e395b">Organize</Label><Caret $ml={5} /></ToolItem>
          <ToolItem $mr={30}><AppWindow /><Label $color="#1e395b">&nbsp;&nbsp;Open</Label><Caret $ml={10} /></ToolItem>
          <ToolItem $mr={0}><Label $color="#1e395b">Share with</Label><Caret $ml={5} /></ToolItem>
        </Toolbar>
        <ExplorerBody>
          <NavPane>
            {nav.map((n, i) => {
              if (!n) return <NavRow key={i} />;
              const [label, Icon, child] = n;
              return (
                <NavRow key={i} $child={child} $selected={label === "Documents"}>
                  <Icon /><Label $lh={18}>{label}</Label>
                </NavRow>
              );
            })}
          </NavPane>
          <FilePane>
            <LibraryHead>
              <Text $size={18.5} $ls={-0.4} $lh={22} $color="#0b7018">Documents library</Text>
              <LibrarySub>
                <Text $color="#5a6779">Includes:</Text>
                <Text $color="#0a5fd0">2 locations</Text>
              </LibrarySub>
            </LibraryHead>
            <ColumnHead><Text $color="#4c607a">Name</Text><SortMark /></ColumnHead>
            {files.map(([label, Icon]) => (
              <FileRow key={label} $selected={label === "ca.cert"}>
                <Icon /><Label $lh={18}>{label}</Label>
              </FileRow>
            ))}
          </FilePane>
        </ExplorerBody>
        <Details>
          <CertLarge />
          <DetailsCol $w={100} $ml={13}>
            <Text $lh={18}>ca.cert</Text>
            <Text $lh={19} $color="#5a6779">Security Certificate</Text>
          </DetailsCol>
          <DetailsCol $w={84} $ml={0} $right>
            <Text $lh={18} $color="#5a6779">Date modified:</Text>
            <Text $lh={19} $color="#5a6779">Size:</Text>
          </DetailsCol>
          <DetailsCol $w={80} $ml={4}>
            <Text $lh={18} $ls={-0.45} $color="#1e395b">06-10-2021</Text>
            <Text $lh={19} $ls={-0.45} $color="#1e395b">3,50 KB</Text>
          </DetailsCol>
        </Details>
      </Window>

      <Window $x={311} $y={26} $w={800} $h={600} $active>
        <TitleBar $h={29} $pad="0 2px 0 0">
          <Caption $top={9}>
            <CaptionButton><Min /></CaptionButton>
            <CaptionButton><Max /></CaptionButton>
            <CaptionButton $close><Close /></CaptionButton>
          </Caption>
        </TitleBar>
        <BrowserBar>
          <IENav />
          <Field $w={424} $ml={0} $pl={4} $pr={4}>
            <IE s={17} />
            <Text $ls={0} $color="#6d6d6d">&nbsp;https://www.</Text>
            <Text $ls={-0.4}>tjs.lan</Text>
            <Text $color="#6d6d6d">/</Text>
            <Spacer />
            <Caret $color="#666d75" $mr={7} />
            <Refresh />
          </Field>
          <Field $w={198} $ml={6} $pl={7} $pr={8}>
            <Text $color="#4d4d4d">Search...</Text>
            <Spacer />
            <Lens />
            <Caret $ml={5} $color="#666d75" />
          </Field>
          <Tools><Home /><FavStar /><Gear /></Tools>
        </BrowserBar>
        <Tabs>
          <Tab>
            <IE s={16} />
            <Text>Certificate Error: Navigatio...</Text>
            <Spacer />
            <TabClose />
          </Tab>
          <NewTab />
        </Tabs>
        <Page>
          <RedShield />
          <Message>
            <Text $size={17.5} $ls={-0.4} $lh={37} $color="#4465a2">There is a problem with this website’s security certificate.</Text>
            <Rule />
            <Text $size={13.5} $ls={0.05} $lh={19} $color="#575757">This organization's certificate has been revoked.</Text>
            <Text $size={13.5} $ls={0.08} $lh={19} $color="#575757"><br />Security certificate problems may indicate an attempt to fool you or intercept any data you send to the<br />server.</Text>
            <Text $size={13.5} $ls={0.06} $lh={20} $bold $color="#4f4f4f"><br />We recommend that you close this webpage and do not continue to this website.</Text>
            <LinkRow $gap={6} $mt={11} $align="flex-start">
              <GreenShield />
              <Text $size={13.5} $ls={0.1} $lh={24} $color="#136fb0">Click here to close this webpage.</Text>
            </LinkRow>
            <LinkRow $gap={10} $mt={34} $pl={2}>
              <MoreIcon />
              <Text $size={15.3} $ls={-0.1} $lh={23} $color="#136fb0">More information</Text>
            </LinkRow>
          </Message>
        </Page>
      </Window>

      <Highlight $x={382} $y={54} $w={173} $h={38} />
      <Highlight $x={329} $y={125} $w={534} $h={107} />

      <Taskbar>
        <Start><Orb /></Start>
        <TaskButton $open="active"><IE s={32} /></TaskButton>
        <TaskButton $open><ExplorerBig /></TaskButton>
        <TaskButton><Firefox /></TaskButton>
        <TaskButton><Putty /></TaskButton>
        <TaskButton><Npp /></TaskButton>
        <TaskButton><Edge /></TaskButton>
        <TaskButton><MRBox>m<b>R</b></MRBox></TaskButton>
        <TaskButton $open><Toolbox s={32} /></TaskButton>
        <TaskButton $open><Cmd big /></TaskButton>
        <Tray>
          <Language><Text $color="#eef3f8">PT</Text></Language>
          <Tri />
          <TrayIcons><Flag /><Net /><Speaker /></TrayIcons>
          <Clock>
            <Text $lh={17} $ls={-0.4} $color="#fff">01:19</Text>
            <Text $lh={17} $ls={-0.4} $color="#fff">06-10-2021</Text>
          </Clock>
          <ShowDesktop />
        </Tray>
      </Taskbar>
    </Desktop>
  );
}
